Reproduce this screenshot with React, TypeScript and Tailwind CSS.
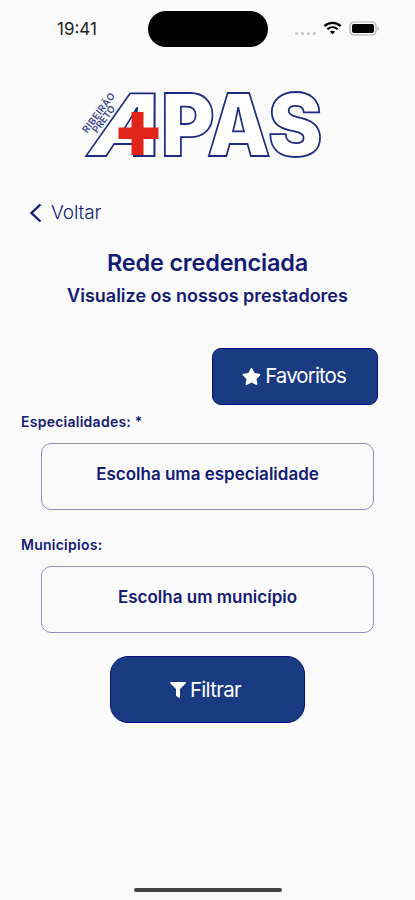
import { FaStar, FaFilter } from 'react-icons/fa';

function StatusBar() {
	return (
		<div className="flex h-[59px] shrink-0 items-start text-black">
			<span className="w-[148px] pt-[18px] pl-[57px] text-[17px] leading-[22px] text-[#222]">
				19:41
			</span>
			<div className="mt-[11px] h-[36px] w-[120px] rounded-full bg-black" />
			<div className="flex items-center pt-[21px] pl-[27px]">
				<div className="mt-[9px] flex gap-[3px]">
					<span className="h-[3px] w-[3px] rounded-full bg-[#c6c6c6]" />
					<span className="h-[3px] w-[3px] rounded-full bg-[#c6c6c6]" />
					<span className="h-[3px] w-[3px] rounded-full bg-[#c6c6c6]" />
					<span className="h-[3px] w-[3px] rounded-full bg-[#c6c6c6]" />
				</div>
				<svg className="mb-[1px] ml-[7px]" width="19" height="14" viewBox="0 0 19 14" fill="none">
					<path d="M1.300 5.200C6 .7 13 .7 17.700 5.200" stroke="#000" strokeWidth="2.300" />
					<path d="M4.400 8.300c3-2.800 7.200-2.800 10.200 0" stroke="#000" strokeWidth="2.100" />
					<path d="M9.500 13.300 6.900 10.700c1.500-1.400 3.700-1.400 5.200 0z" fill="#000" />
				</svg>
				<svg className="ml-[7px]" width="31" height="15" viewBox="0 0 31 15">
					<rect x="1" y="1" width="26" height="13" rx="4" fill="#fafafa" stroke="#aaa" strokeWidth="1.200" />
					<rect x="3" y="3" width="22" height="9" rx="2" fill="#000" />
					<path d="M28.500 5.500v4c2-.8 2-3.200 0-4z" fill="#aaa" />
				</svg>
			</div>
		</div>
	);
}

function Logo() {
	return (
		<svg
			className="h-[120px] w-[290px] shrink-0"
			viewBox="58 65 290 120"
			fontFamily="Inter, sans-serif"
			role="img"
			aria-label="APAS Ribeirão Preto"
		>
			<g fontSize="86" fontWeight="900" fill="#fff" stroke="#1c2a80" strokeWidth="1.800">
				<text transform="matrix(1.06 0 -.36 1 84 156)">A</text>
				<text transform="matrix(.95 0 0 1 161 156)">P</text>
				<text transform="matrix(.93 0 0 1 207 156)">A</text>
				<text transform="matrix(.95 0 0 1 268 156)">S</text>
			</g>
			<g fontSize="9.500" fontWeight="600" fill="#3a4688">
				<text transform="translate(87 133.500) rotate(-53)" textLength="47">RIBEIRÃO</text>
				<text transform="translate(97 133.500) rotate(-53)" textLength="31">PRETO</text>
			</g>
			<path d="M131.500 112h12v15.500h15v11.500h-15v16h-12v-16h-13v-11.500h13z" fill="#e1251b" />
		</svg>
	);
}

interface SelectFieldProps {
	label: string;
	placeholder: string;
}

function SelectField({ label, placeholder }: SelectFieldProps) {
	return (
		<div>
			<label className="block pl-[21px] text-[14px] leading-[20px] font-semibold tracking-[0.25px]">{label}</label>
			<button
				type="button"
				className="mt-[11px] ml-[41px] flex h-[67px] w-[333px] justify-center rounded-[10px] border border-[#8d90b5] pt-[19px] text-[17px] leading-[22px] font-semibold"
			>
				{placeholder}
			</button>
		</div>
	);
}

export default function App() {
	return (
		<main className="flex h-[900px] w-[415px] flex-col overflow-hidden bg-[#fafafa] font-['Inter',sans-serif] text-[#141b73]">
			<StatusBar />
			<div className="mt-[6px] flex pl-[58px]">
				<Logo />
			</div>

			{/* Back link */}
			<button type="button" className="mt-[15px] ml-[29px] flex h-[26px] items-center self-start">
				<svg width="13" height="20" viewBox="0 0 13 20" fill="none" stroke="currentColor" strokeWidth="2.400">
					<path d="M11.500 1.500 2.500 10l9 8.500" />
				</svg>
				<span className="ml-[9px] text-[19px] leading-[26px] font-light tracking-[-0.1px]">Voltar</span>
			</button>

			{/* Page title */}
			<h1 className="mt-[22px] text-center text-[23.500px] leading-[30px] font-semibold tracking-[-0.2px]">
				Rede credenciada
			</h1>
			<h2 className="mt-[7px] text-center text-[18px] leading-[22px] font-semibold">
				Visualize os nossos prestadores
			</h2>

			<button
				type="button"
				className="mt-[41px] mr-[37px] flex h-[57px] w-[166px] shrink-0 items-center justify-center self-end rounded-[9px] border border-[#06107a] bg-[#1a3a82] pr-[2px] text-[20.500px] tracking-[-0.9px] text-white"
			>
				<FaStar size={19} />
				<span className="ml-[4px]">Favoritos</span>
			</button>

			<div className="mt-[7px] flex flex-col gap-[25px]">
				<SelectField label="Especialidades: *" placeholder="Escolha uma especialidade" />
				<SelectField label="Municipios:" placeholder="Escolha um município" />
			</div>

			<button
				type="button"
				className="mt-[23px] ml-[110px] flex h-[67px] w-[195px] shrink-0 items-center justify-center rounded-[18px] border border-[#06107a] bg-[#1a3a82] pt-[1px] pr-[4px] text-[20.500px] tracking-[-0.7px] text-white"
			>
				<FaFilter size={16} />
				<span className="ml-[4px]">Filtrar</span>
			</button>

			{/* Home indicator */}
			<div className="mt-auto mb-[8px] ml-[134px] h-[4px] w-[148px] shrink-0 rounded-full bg-[#444]" />
		</main>
	);
}
